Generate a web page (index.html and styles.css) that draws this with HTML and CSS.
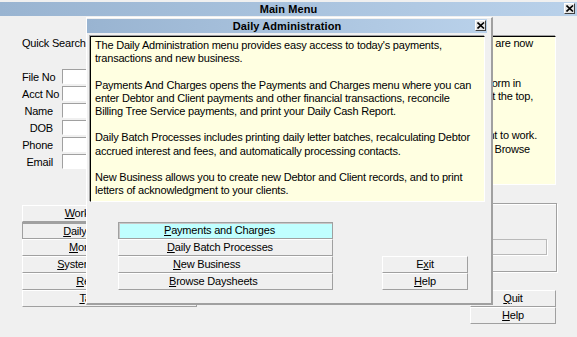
FILE: index.html
```html
<!DOCTYPE html>
<html>
<head>
<meta charset="utf-8">
<link rel="stylesheet" href="styles.css">
</head>
<body>
<div class="main">
  <div class="titlebar">
    <span class="title-text">Main Menu</span>
    <span class="close-btn main-close"><svg width="8" height="7" viewBox="0 0 8 7"><path d="M0.5 0.5 L7 6.5 M7 0.5 L0.5 6.5" stroke="#000" stroke-width="1.6"/></svg></span>
  </div>
  <div class="main-body">
    <div class="left-col">
      <div class="qs">Quick Search</div>
      <div class="form">
        <div class="row"><span class="lbl">File No</span><span class="field"></span></div>
        <div class="row"><span class="lbl">Acct No</span><span class="field"></span></div>
        <div class="row"><span class="lbl">Name</span><span class="field"></span></div>
        <div class="row"><span class="lbl">DOB</span><span class="field"></span></div>
        <div class="row"><span class="lbl">Phone</span><span class="field"></span></div>
        <div class="row"><span class="lbl">Email</span><span class="field"></span></div>
      </div>
      <div class="menu-list">
        <div class="btn"><u>W</u>ork Management</div>
        <div class="btn pressed"><u>D</u>aily Administration</div>
        <div class="btn"><u>M</u>onth End Menu</div>
        <div class="btn"><u>S</u>ystem Administration</div>
        <div class="btn"><u>R</u>eports Menu</div>
        <div class="btn"><u>T</u>ables Menu</div>
      </div>
    </div>
    <div class="right-col">
      <div class="info main-info">
        <div class="ln l1">The most frequently used menu options are now</div>
        <div class="ln hid">grouped into the menus below.</div>
        <div class="ln hid">&nbsp;</div>
        <div class="ln l4">To find a record, enter its details in the form in</div>
        <div class="ln l5">the left panel, or use Quick Search at the top,</div>
        <div class="ln hid">then press Enter to open it.</div>
        <div class="ln hid">&nbsp;</div>
        <div class="ln l8">Then pick the menu you want to work.</div>
        <div class="ln l9">on, or choose Reports, Tools or Browse</div>
      </div>
      <div class="group"><div class="group-field"></div></div>
      <div class="side-btns">
        <div class="btn"><u>Q</u>uit</div>
        <div class="btn"><u>H</u>elp</div>
      </div>
    </div>
  </div>

  <div class="dialog">
    <div class="titlebar dlg-title">
      <span class="title-text">Daily Administration</span>
      <span class="close-btn dlg-close"><svg width="8" height="7" viewBox="0 0 8 7"><path d="M0.5 0.5 L7 6.5 M7 0.5 L0.5 6.5" stroke="#000" stroke-width="1.6"/></svg></span>
    </div>
    <div class="info dlg-info">
      <p>The Daily Administration menu provides easy access to today's payments,<br>transactions and new business.</p>
      <p>Payments And Charges opens the Payments and Charges menu where you can<br>enter Debtor and Client payments and other financial transactions, reconcile<br>Billing Tree Service payments, and print your Daily Cash Report.</p>
      <p>Daily Batch Processes includes printing daily letter batches, recalculating Debtor<br>accrued interest and fees, and automatically processing contacts.</p>
      <p>New Business allows you to create new Debtor and Client records, and to print<br>letters of acknowledgment to your clients.</p>
    </div>
    <div class="dlg-actions">
      <div class="dlg-menu">
        <div class="btn opt selected o1"><u>P</u>ayments and Charges</div>
        <div class="btn opt o2"><u>D</u>aily Batch Processes</div>
        <div class="btn opt o3"><u>N</u>ew Business</div>
        <div class="btn opt o4"><u>B</u>rowse Daysheets</div>
      </div>
      <div class="dlg-side">
        <div class="btn">E<u>x</u>it</div>
        <div class="btn"><u>H</u>elp</div>
      </div>
    </div>
  </div>
</div>
</body>
</html>
```

FILE: styles.css
```css
* { box-sizing: border-box; }

body {
  margin: 0;
  background: #f0f0f0;
  font-family: "Liberation Sans", Arial, sans-serif;
  font-size: 11px;
  letter-spacing: -0.2px;
  color: #000;
}

.main {
  position: relative;
  width: 577px;
  height: 337px;
  overflow: hidden;
}

.titlebar {
  position: relative;
  height: 14px;
  margin-top: 2px;
  background: linear-gradient(to right, #99b4d1, #b9d1ea);
  display: flex;
  align-items: center;
  justify-content: center;
  font-weight: bold;
  letter-spacing: 0.1px;
}

.title-text { line-height: 14px; }

.close-btn {
  position: absolute;
  top: 1px;
  width: 11px;
  height: 11px;
  background: #e6e6e6;
  border: 1px solid;
  border-color: #fff #404040 #404040 #fff;
  display: flex;
  align-items: center;
  justify-content: center;
}

.main-close { right: 2px; }

.main-body {
  display: flex;
  justify-content: space-between;
}

/* left column */
.left-col {
  width: 175px;
  margin-left: 22px;
}

.qs {
  margin-top: 20px;
  height: 14px;
  line-height: 14px;
}

.form { margin-top: 19px; }

.row {
  display: flex;
  align-items: center;
  height: 17px;
}

.lbl {
  width: 31px;
  text-align: right;
  white-space: nowrap;
  line-height: 15px;
}

.field {
  margin-left: 9px;
  width: 120px;
  height: 15px;
  background: #fff;
  border: 1px solid;
  border-color: #a0a0a0 #fff #fff #a0a0a0;
  margin-bottom: 2px;
}

.menu-list { margin-top: 34px; }

.btn {
  height: 17px;
  line-height: 15px;
  text-align: center;
  white-space: nowrap;
  border: 1px solid;
  border-color: #fff #a0a0a0 #a0a0a0 #fff;
  background: #f0f0f0;
}

.btn.pressed {
  border-width: 2px 1px 1px 1px;
  border-color: #a0a0a0;
  line-height: 14px;
}

/* right column */
.right-col {
  width: 317px;
  margin-right: 20px;
  display: flex;
  flex-direction: column;
}

.info {
  background: #ffffe1;
  border: 1px solid;
  border-color: #000 #fff #fff #000;
  box-shadow: -1px -1px 0 #a0a0a0;
  overflow: hidden;
}

.main-info {
  margin-top: 20px;
  margin-right: 1px;
  height: 149px;
  line-height: 13.2px;
}

.ln {
  white-space: nowrap;
  text-align: right;
}

.l1 { padding-right: 22px; }
.l4 { padding-right: 34px; }
.l5 { padding-right: 22px; }
.l8 { padding-right: 18px; }
.l9 { padding-right: 25px; }
.hid { padding-right: 90px; }

.group {
  margin-top: 18px;
  height: 69px;
  border: 1px solid #a0a0a0;
  box-shadow: inset 1px 1px 0 #fff, 1px 1px 0 #fff;
  padding-top: 35px;
  padding-right: 9px;
  display: flex;
  justify-content: flex-end;
}

.group-field {
  width: 260px;
  height: 16px;
  border: 1px solid #b9b9b9;
  box-shadow: 1px 1px 0 #fff;
}

.side-btns {
  margin-top: 18px;
  margin-right: 1px;
  align-self: flex-end;
  width: 86px;
}

/* dialog */
.dialog {
  position: absolute;
  left: 86px;
  top: 17px;
  width: 407px;
  height: 288px;
  background: #f0f0f0;
  border-style: solid;
  border-width: 1px 2px 2px 1px;
  border-color: #fff #a0a0a0 #a0a0a0 #fff;
}

.dlg-title {
  margin: 1px 4px 0 0;
}

.dlg-close { right: 1px; }

.dlg-info {
  margin: 3px 0 0 3px;
  width: 395px;
  height: 166px;
  padding: 2px 0 0 4px;
  line-height: 13.2px;
  white-space: nowrap;
}

.dlg-info p {
  margin: 0 0 13.2px 0;
}

.dlg-actions {
  display: flex;
  margin-top: 20px;
}

.dlg-menu {
  margin-left: 31px;
  width: 215px;
}

.opt { text-align: left; }
.o1 { padding-left: 45px; }
.o2 { padding-left: 48px; }
.o3 { padding-left: 54px; }
.o4 { padding-left: 50px; }

.btn.selected {
  background: #c0ffff;
  border: 1px solid #a0a0a0;
  box-shadow: inset 1px 1px 0 #c8c8c8;
}

.dlg-side {
  margin-left: 49px;
  width: 86px;
  align-self: flex-end;
}
```
